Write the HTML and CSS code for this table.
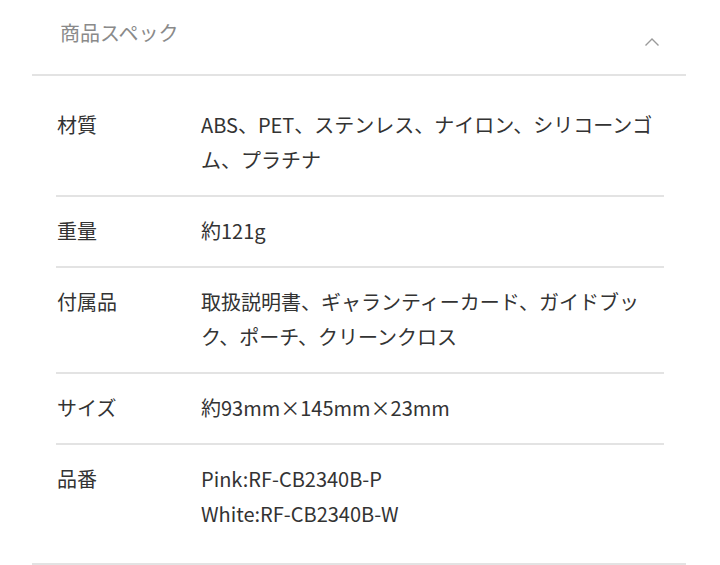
FILE: index.html
```html
<!DOCTYPE html>
<html lang="ja">
<head>
<meta charset="utf-8">
<link rel="stylesheet" href="styles.css">
</head>
<body>
<section class="spec">
  <div class="spec-head">
    <h2 class="spec-title">商品スペック</h2>
    <svg class="chevron" width="16" height="10" viewBox="0 0 16 10"><path d="M1.5 8.5 L8 2 L14.5 8.5" fill="none" stroke="#9a9a9a" stroke-width="1.4"/></svg>
  </div>
  <div class="spec-body">
    <div class="row"><div class="label">材質</div><div class="value">ABS、PET、ステンレス、ナイロン、シリコーンゴム、プラチナ</div></div>
    <div class="row"><div class="label">重量</div><div class="value">約121g</div></div>
    <div class="row"><div class="label">付属品</div><div class="value">取扱説明書、ギャランティーカード、ガイドブック、ポーチ、クリーンクロス</div></div>
    <div class="row"><div class="label">サイズ</div><div class="value">約93mm×145mm×23mm</div></div>
    <div class="row last"><div class="label">品番</div><div class="value">Pink:RF-CB2340B-P<br>White:RF-CB2340B-W</div></div>
  </div>
</section>
</body>
</html>
```
FILE: styles.css
```css
html, body {
  margin: 0;
  padding: 0;
  background: #ffffff;
}
body {
  font-family: "Noto Sans CJK JP", "Noto Sans", sans-serif;
  color: #333333;
}
.spec {
  margin: 0 34px 0 32px;
  border-bottom: 2px solid #e3e3e3;
}
.spec-head {
  display: flex;
  justify-content: space-between;
  align-items: flex-start;
  height: 74px;
  padding: 0 26px 0 28px;
  border-bottom: 2px solid #e3e3e3;
}
.spec-title {
  margin: 18px 0 0 0;
  font-size: 20px;
  font-weight: 400;
  line-height: 30px;
  color: #8a8a8a;
  letter-spacing: 0;
}
.chevron {
  margin-top: 37px;
}
.spec-body {
  margin: 15px 22px 14px 24px;
}
.row {
  display: flex;
  padding: 16px 0 18px 0;
  border-bottom: 2px solid #e3e3e3;
  font-size: 20px;
  line-height: 35px;
}
.row.last {
  border-bottom: none;
}
.label {
  width: 144px;
  flex: none;
  padding-left: 1px;
}
.value {
  flex: 1;
}
```
